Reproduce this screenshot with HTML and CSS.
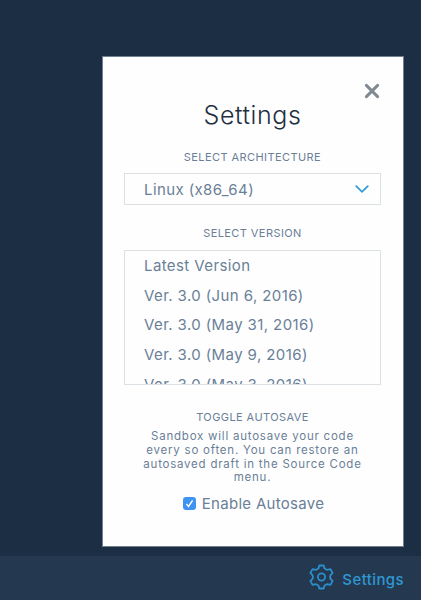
FILE: index.html
```
<!DOCTYPE html>
<html lang="en">
  <head>
    <meta charset="utf-8" />
    <title>Settings</title>
    <link rel="stylesheet" href="styles.css">
  </head>
  <body>
    <div class="content">
      <div class="settings-panel">
        <button class="close-button" aria-label="Close">
          <svg width="16" height="16" viewBox="0 0 16 16">
            <path d="M2.4 2.4L13.6 13.6M13.6 2.4L2.4 13.6" />
          </svg>
        </button>
        <h2>Settings</h2>

        <h4 class="label-arch">Select Architecture</h4>
        <div class="select-box">
          <span>Linux (x86_64)</span>
          <svg width="14" height="9" viewBox="0 0 14 9">
            <path d="M1.2 1.2L7 6.8L12.8 1.2" />
          </svg>
        </div>

        <h4 class="label-version">Select Version</h4>
        <ul class="version-list">
          <li>Latest Version</li>
          <li>Ver. 3.0 (Jun 6, 2016)</li>
          <li>Ver. 3.0 (May 31, 2016)</li>
          <li>Ver. 3.0 (May 9, 2016)</li>
          <li>Ver. 3.0 (May 3, 2016)</li>
        </ul>

        <h4 class="label-autosave">Toggle Autosave</h4>
        <p>
          Sandbox will autosave your code<br />
          every so often. You can restore an<br />
          autosaved draft in the Source Code<br />
          menu.
        </p>
        <div class="autosave">
          <span class="checkbox">
            <svg width="13" height="13" viewBox="0 0 13 13">
              <path d="M3.4 6.9L5.5 9.5L9.6 3.3" />
            </svg>
          </span>
          <span>Enable Autosave</span>
        </div>
      </div>
    </div>

    <div class="footer">
      <svg class="gear" width="25" height="26" viewBox="0 0 25 26">
        <path d="M10.3 1.5H14.7L15.4 4.2Q16.8 5.6 18.2 5.9L21.4 5.1L23.6 8.9L21.4 11.3Q20.8 13 21.4 14.7L23.6 17.1L21.4 20.9L18.2 20.1Q16.8 20.4 15.4 21.8L14.7 24.5H10.3L9.6 21.8Q8.2 20.4 6.8 20.1L3.6 20.9L1.4 17.1L3.6 14.7Q4.2 13 3.6 11.3L1.4 8.9L3.6 5.1L6.8 5.9Q8.2 5.6 9.6 4.2Z" />
        <circle cx="12.5" cy="13" r="3.6" />
      </svg>
      <span>Settings</span>
    </div>
  </body>
</html>
```
FILE: styles.css
```
* {
  box-sizing: border-box;
}

body {
  margin: 0;
  height: 600px;
  display: flex;
  flex-direction: column;
  overflow: hidden;
  font-family: Inter, "Liberation Sans", sans-serif;
  background-color: #1c2e43;
  color: #6a7f98;
}

h2, h4, p, ul {
  margin: 0;
  padding: 0;
  font-weight: 400;
}

.content {
  height: 556px;
  padding: 56px 17px 0 102px;
}

.settings-panel {
  position: relative;
  height: 491px;
  padding: 43px 22px 0 21px;
  border: 1px solid #707f8f;
  background-color: #fefefe;
  text-align: center;
}

.close-button {
  position: absolute;
  top: 25.5px;
  right: 23.5px;
  width: 16px;
  height: 16px;
  padding: 0;
  border: none;
  background: none;
}

.close-button svg {
  display: block;
  fill: none;
  stroke: #808a95;
  stroke-width: 3;
  stroke-linecap: round;
}

h2 {
  height: 30px;
  font-size: 25px;
  line-height: 30px;
  font-weight: 300;
  letter-spacing: 0.6px;
  color: #1f2f42;
}

h4 {
  height: 16px;
  font-size: 11px;
  line-height: 16px;
  letter-spacing: 0.42px;
  text-transform: uppercase;
}

.label-arch {
  margin-top: 19px;
}

.select-box {
  display: flex;
  align-items: center;
  justify-content: space-between;
  height: 32px;
  margin-top: 8px;
  padding: 0 11px 0 19px;
  border: 1px solid #dce1e5;
  font-size: 15px;
  letter-spacing: 0.4px;
}

.select-box svg {
  fill: none;
  stroke: #2e9bd6;
  stroke-width: 1.7;
  stroke-linecap: round;
}

.label-version {
  margin-top: 20px;
}

.version-list {
  height: 135px;
  margin-top: 9px;
  padding: 0 19px;
  overflow: hidden;
  border: 1px solid #dce1e5;
  list-style: none;
  text-align: left;
  font-size: 15px;
  line-height: 29.7px;
  letter-spacing: 0.4px;
}

.label-autosave {
  margin-top: 24px;
}

p {
  margin-top: 5px;
  font-size: 11.5px;
  line-height: 13.8px;
  letter-spacing: 0.77px;
}

.autosave {
  display: flex;
  align-items: center;
  justify-content: center;
  gap: 6px;
  height: 20px;
  margin-top: 8px;
  padding-left: 2px;
  font-size: 15px;
  letter-spacing: 0.3px;
}

.checkbox {
  width: 13px;
  height: 13px;
  border-radius: 3px;
  background-color: #3e94f0;
}

.checkbox svg {
  display: block;
  fill: none;
  stroke: #fff;
  stroke-width: 1.4;
}

.footer {
  display: flex;
  align-items: center;
  justify-content: flex-end;
  gap: 8px;
  height: 44px;
  padding: 0 17px 2px 0;
  background-color: #243950;
  color: #2f97d3;
  font-size: 15px;
  font-weight: 500;
  letter-spacing: 0.4px;
}

.footer span {
  padding-top: 4px;
}

.gear {
  fill: none;
  stroke: #2b8fcb;
  stroke-width: 1.8;
  stroke-linejoin: round;
}
```
